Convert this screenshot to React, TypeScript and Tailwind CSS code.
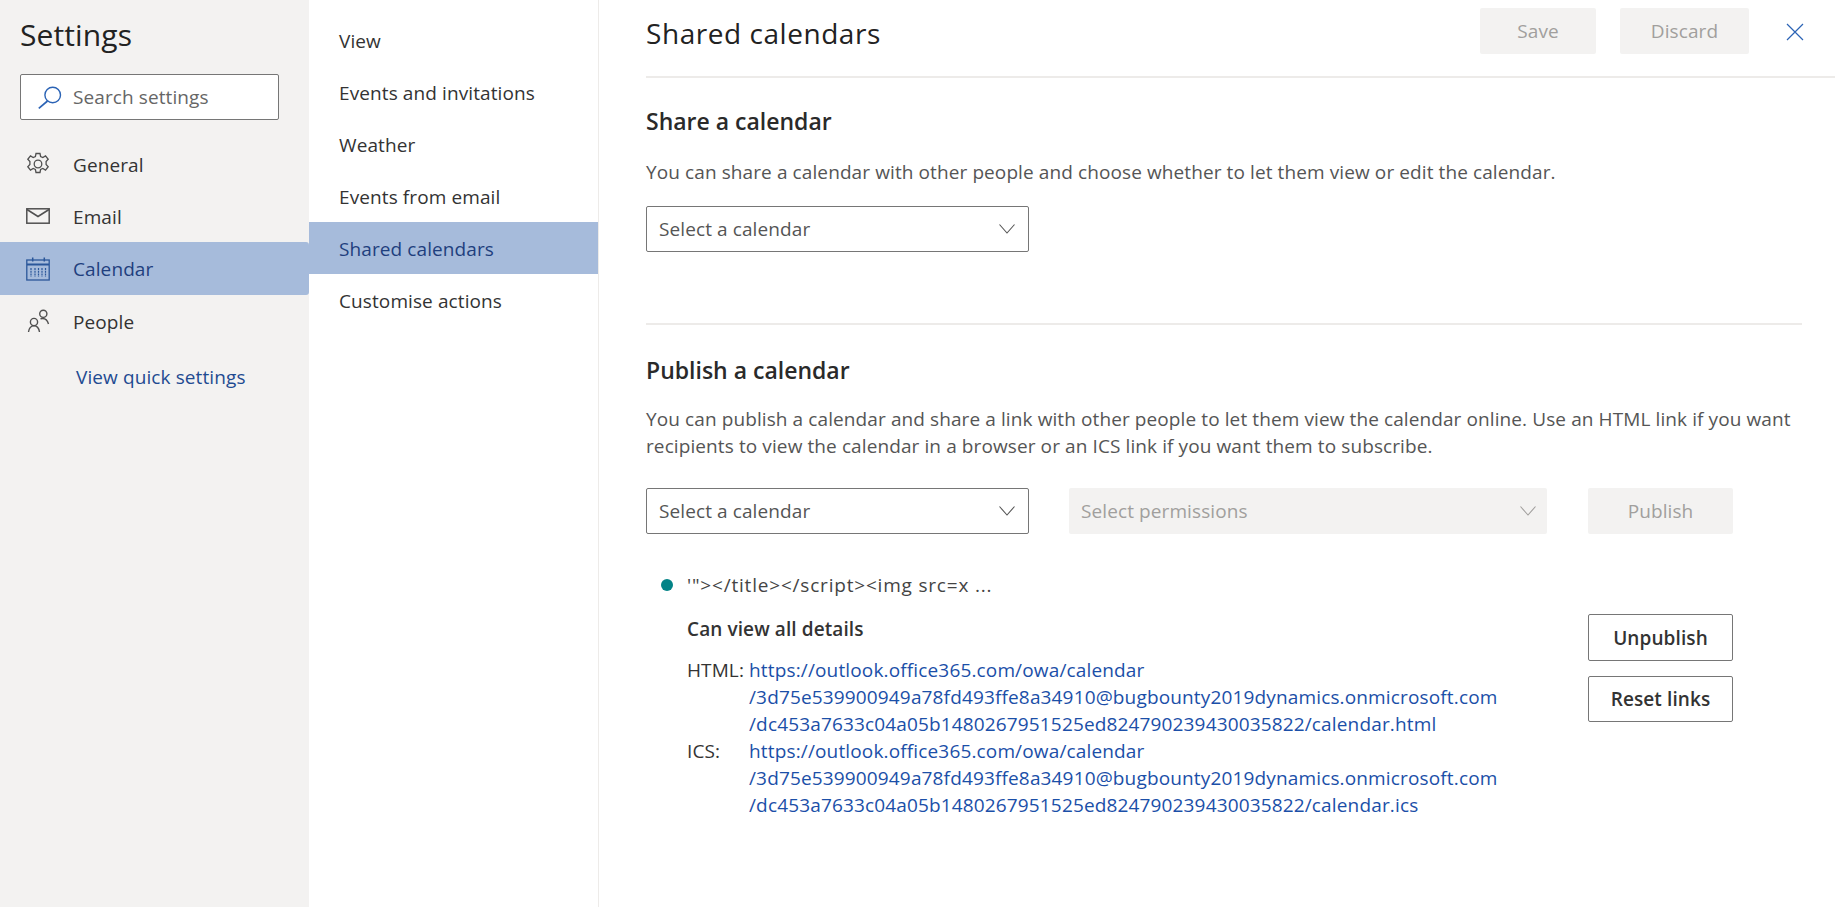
import { ReactNode } from 'react';

const font = 'font-["Open_Sans","Noto_Sans",sans-serif]';

function SearchIcon() {
  return (
    <svg viewBox="0 0 24 24" className="h-[24px] w-[24px]" fill="none" stroke="#2b63b5" strokeWidth="1.4">
      <circle cx="14.7" cy="10" r="7.800" />
      <path d="M9.500 16 L0.800 23.300" strokeWidth="1.700" />
    </svg>
  );
}

function GearIcon() {
  return (
    <svg viewBox="0 0 24 24" className="h-[24px] w-[24px]" fill="none" stroke="#505050" strokeWidth="1.300">
      <circle cx="12" cy="12" r="3.800" />
      <path d="M10 1.500h4l.6 3 2.200 1 2.700-1.600 2.700 3.400-2.100 2.300v2.800l2.100 2.300-2.700 3.400-2.700-1.600-2.200 1-.6 3h-4l-.6-3-2.200-1-2.700 1.600-2.700-3.400 2.100-2.300V9.600L1.800 7.300l2.700-3.400 2.700 1.600 2.200-1z" />
    </svg>
  );
}

function MailIcon() {
  return (
    <svg viewBox="0 0 24 16" className="h-[16px] w-[24px]" fill="none" stroke="#505050" strokeWidth="1.500">
      <rect x="0.800" y="0.800" width="22.400" height="14.400" />
      <path d="M1 1.500 L12 8.500 L23 1.500" />
    </svg>
  );
}

function CalendarIcon() {
  return (
    <svg viewBox="0 0 24 24" className="h-[24px] w-[24px]" fill="none" stroke="#2b579a" strokeWidth="1.300">
      <rect x="0.800" y="3" width="22.400" height="20" />
      <path d="M1 7.500h22" strokeWidth="2" />
      <path d="M6.700 0.500v4M18.300 0.500v4" strokeWidth="1.500" />
      <path d="M5 11v9M9 11v9M12.500 11v9M16 11v9M19.500 11v9" strokeWidth="1.200" strokeDasharray="2 0.800" />
    </svg>
  );
}

function PeopleIcon() {
  return (
    <svg viewBox="0 0 24 24" className="h-[24px] w-[24px]" fill="none" stroke="#505050" strokeWidth="1.400">
      <circle cx="8" cy="13" r="3.600" />
      <path d="M2.500 23c.3-3 2.300-6.200 5.500-6.200s5 3 5.500 6.200" />
      <circle cx="17.300" cy="4.800" r="3.600" />
      <path d="M14.500 9.800c3.700-1 6.800.8 8 5.200" />
    </svg>
  );
}

function Chevron({ color = '#555' }: { color?: string }) {
  return (
    <svg viewBox="0 0 16 10" className="h-[10px] w-[16px]" fill="none" stroke={color} strokeWidth="1.100">
      <path d="M0.500 0.500 L8 9 L15.500 0.500" />
    </svg>
  );
}

function SideItem({ icon, label, active }: { icon: ReactNode; label: string; active?: boolean }) {
  return (
    <div className={active ? 'flex h-[53px] items-center rounded-r-[3px] bg-[#a6bbdb] pl-[26px] text-[#1f3f7e]' : 'flex h-[52px] items-center pl-[26px] text-[#333]'}>
      <span className="flex w-[47px] items-center">{icon}</span>
      <span className="pt-[2px]">{label}</span>
    </div>
  );
}

function SubItem({ label, active }: { label: string; active?: boolean }) {
  return (
    <div className={active ? 'flex h-[52px] items-center bg-[#a6bbdb] pl-[30px] pt-[2px] text-[#1f3f7e]' : 'flex h-[52px] items-center pl-[30px] pt-[2px] text-[#333]'}>
      {label}
    </div>
  );
}

function Select({ label }: { label: string }) {
  return (
    <div className="flex h-[46px] w-[383px] items-center justify-between rounded-[2px] border border-[#767676] pl-[12px] pr-[13px] text-[#555]">
      <span className="pt-[1px]">{label}</span>
      <Chevron />
    </div>
  );
}

export default function App() {
  return (
    <div className={`${font} flex h-[907px] w-[1835px] overflow-hidden bg-white text-[19px] tracking-[0.1px]`}>
      <aside className="w-[309px] shrink-0 bg-[#f3f2f1]">
        <h1 className="mt-[14px] ml-[20px] h-[42px] text-[30px] font-medium leading-[42px] tracking-[0.1px] text-[#222]">Settings</h1>
        <div className="mx-[20px] mt-[18px] flex h-[46px] w-[259px] items-center rounded-[2px] border border-[#767676] bg-white pl-[17px] text-[#666]">
          <SearchIcon />
          <span className="ml-[11px]">Search settings</span>
        </div>
        <nav className="mt-[18px]">
          <SideItem icon={<GearIcon />} label="General" />
          <SideItem icon={<MailIcon />} label="Email" />
          <SideItem icon={<CalendarIcon />} label="Calendar" active />
          <SideItem icon={<PeopleIcon />} label="People" />
        </nav>
        <div className="mt-[17px] ml-[76px] leading-[26px] text-[#1f4b91]">View quick settings</div>
      </aside>

      <div className="w-[290px] shrink-0 border-r border-[#edebe9] pt-[14px]">
        <SubItem label="View" />
        <SubItem label="Events and invitations" />
        <SubItem label="Weather" />
        <SubItem label="Events from email" />
        <SubItem label="Shared calendars" active />
        <SubItem label="Customise actions" />
      </div>

      <main className="min-w-0 flex-1 pl-[47px]">
        <header className="flex h-[78px] items-start border-b-2 border-[#edebe9] pt-[8px]">
          <h2 className="flex-1 text-[28px] font-medium leading-[50px] tracking-[0.55px] text-[#222]">Shared calendars</h2>
          <button className="h-[46px] w-[116px] rounded-[2px] bg-[#f3f2f1] text-[#a19f9d]">Save</button>
          <button className="ml-[24px] h-[46px] w-[129px] rounded-[2px] bg-[#f3f2f1] text-[#a19f9d]">Discard</button>
          <svg viewBox="0 0 18 18" className="mt-[15px] ml-[37px] mr-[31px] h-[18px] w-[18px]" fill="none" stroke="#2b63b5" strokeWidth="1.200">
            <path d="M1 1 L17 17 M17 1 L1 17" />
          </svg>
        </header>

        <section className="mr-[33px] h-[247px] border-b-2 border-[#edebe9]">
          <h3 className="pt-[28px] text-[23px] font-semibold leading-[30px] tracking-normal text-[#2a2a2a]">Share a calendar</h3>
          <p className="mt-[23px] leading-[26px] text-[#555]">
            You can share a calendar with other people and choose whether to let them view or edit the calendar.
          </p>
          <div className="mt-[21px]">
            <Select label="Select a calendar" />
          </div>
        </section>

        <section className="mr-[33px]">
          <h3 className="pt-[30px] text-[23px] font-semibold leading-[30px] tracking-normal text-[#2a2a2a]">Publish a calendar</h3>
          <p className="mt-[21px] whitespace-nowrap leading-[27px] text-[#555]">
            You can publish a calendar and share a link with other people to let them view the calendar online. Use an HTML link if you want
            <br />
            recipients to view the calendar in a browser or an ICS link if you want them to subscribe.
          </p>
          <div className="mt-[28px] flex items-center">
            <Select label="Select a calendar" />
            <div className="ml-[40px] flex h-[46px] w-[478px] items-center justify-between rounded-[2px] bg-[#f3f2f1] pl-[12px] pr-[11px] text-[#a19f9d]">
              <span>Select permissions</span>
              <Chevron color="#a19f9d" />
            </div>
            <button className="ml-[41px] h-[46px] w-[145px] rounded-[2px] bg-[#f3f2f1] text-[#a19f9d]">Publish</button>
          </div>

          <div className="mt-[39px] flex">
            <div className="w-[942px]">
              <div className="flex h-[24px] items-center text-[#444]">
                <span className="ml-[15px] h-[12px] w-[12px] rounded-full bg-[#038387]"></span>
                <span className="ml-[14px] tracking-[0.8px]">'"&gt;&lt;/title&gt;&lt;/script&gt;&lt;img src=x ...</span>
              </div>
              <div className="mt-[19px] pl-[41px]">
                <div className="font-semibold leading-[26px] text-[#333]">Can view all details</div>
                <div className="mt-[15px] flex text-[#333]">
                  <span className="w-[62px] shrink-0 leading-[27px]">HTML:</span>
                  <div className="leading-[27px] tracking-[0.15px] text-[#1b4fa8]">
                    <div>https://outlook.office365.com/owa/calendar</div>
                    <div>/3d75e539900949a78fd493ffe8a34910@bugbounty2019dynamics.onmicrosoft.com</div>
                    <div>/dc453a7633c04a05b1480267951525ed824790239430035822/calendar.html</div>
                  </div>
                </div>
                <div className="flex text-[#333]">
                  <span className="w-[62px] shrink-0 leading-[27px]">ICS:</span>
                  <div className="leading-[27px] tracking-[0.15px] text-[#1b4fa8]">
                    <div>https://outlook.office365.com/owa/calendar</div>
                    <div>/3d75e539900949a78fd493ffe8a34910@bugbounty2019dynamics.onmicrosoft.com</div>
                    <div>/dc453a7633c04a05b1480267951525ed824790239430035822/calendar.ics</div>
                  </div>
                </div>
              </div>
            </div>
            <div className="mt-[41px] flex w-[145px] flex-col gap-[15px]">
              <button className="h-[47px] rounded-[2px] border border-[#767676] pt-[2px] font-semibold text-[#333]">Unpublish</button>
              <button className="h-[46px] rounded-[2px] border border-[#767676] font-semibold text-[#333]">Reset links</button>
            </div>
          </div>
        </section>
      </main>
    </div>
  );
}
